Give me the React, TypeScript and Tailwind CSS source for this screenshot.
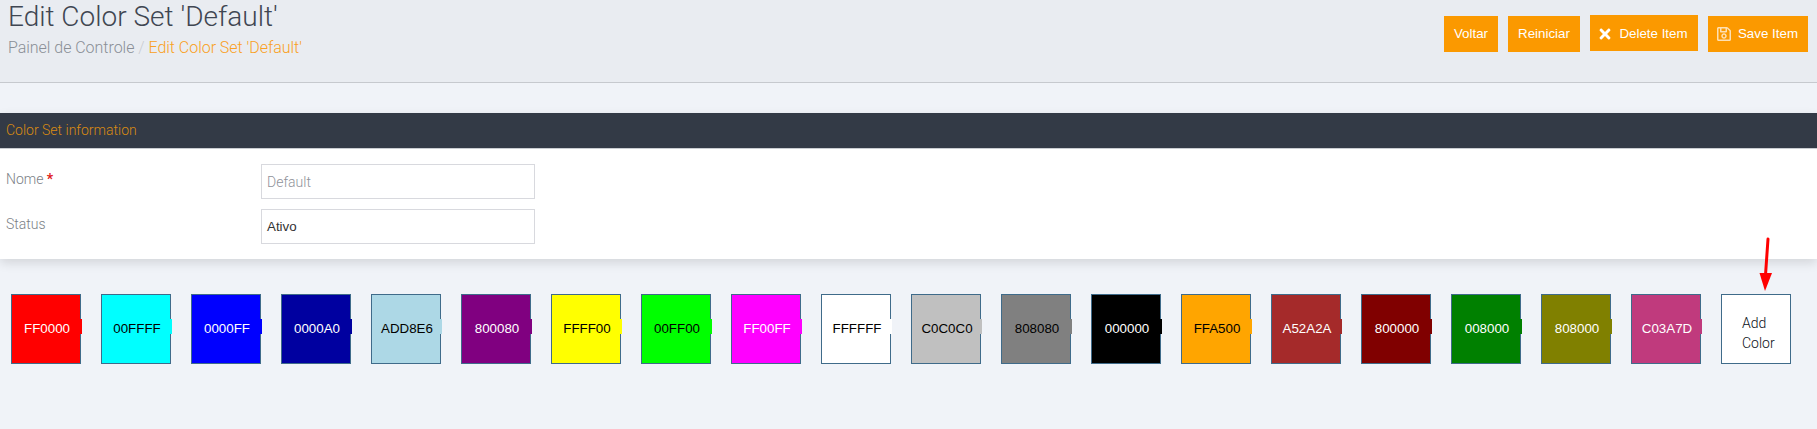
import React from 'react'
import { FaRegSave, FaTimes } from 'react-icons/fa'

const swatches = [
  { code: 'FF0000', bg: 'bg-[#ff0000]', text: 'text-white' },
  { code: '00FFFF', bg: 'bg-[#00ffff]', text: 'text-black' },
  { code: '0000FF', bg: 'bg-[#0000ff]', text: 'text-white' },
  { code: '0000A0', bg: 'bg-[#0000a0]', text: 'text-white' },
  { code: 'ADD8E6', bg: 'bg-[#add8e6]', text: 'text-black' },
  { code: '800080', bg: 'bg-[#800080]', text: 'text-white' },
  { code: 'FFFF00', bg: 'bg-[#ffff00]', text: 'text-black' },
  { code: '00FF00', bg: 'bg-[#00ff00]', text: 'text-black' },
  { code: 'FF00FF', bg: 'bg-[#ff00ff]', text: 'text-white' },
  { code: 'FFFFFF', bg: 'bg-[#ffffff]', text: 'text-black' },
  { code: 'C0C0C0', bg: 'bg-[#c0c0c0]', text: 'text-black' },
  { code: '808080', bg: 'bg-[#808080]', text: 'text-black' },
  { code: '000000', bg: 'bg-[#000000]', text: 'text-white' },
  { code: 'FFA500', bg: 'bg-[#ffa500]', text: 'text-black' },
  { code: 'A52A2A', bg: 'bg-[#a52a2a]', text: 'text-white' },
  { code: '800000', bg: 'bg-[#800000]', text: 'text-white' },
  { code: '008000', bg: 'bg-[#008000]', text: 'text-white' },
  { code: '808000', bg: 'bg-[#808000]', text: 'text-white' },
  { code: 'C03A7D', bg: 'bg-[#c03a7d]', text: 'text-white' }
]

const btn =
  "flex h-9 items-center justify-center bg-[#fb9900] font-['Liberation_Sans',sans-serif] text-[13.33px] text-white"

const App = () => {
  return (
    <div className="relative h-[429px] overflow-hidden bg-[#f0f3f8] font-['Roboto',sans-serif]">
      <header className="flex h-[83px] justify-between border-b border-[#c6c9ce] bg-[#e9ecf1] pl-2 pr-[9px]">
        <div>
          <h1 className="text-[28px] leading-[34px] font-light text-[#3f4652]">Edit Color Set 'Default'</h1>
          <p className="mt-[2px] text-[16px] leading-[24px] font-light tracking-[-0.03px] text-[#8a8f96]">
            Painel de Controle <span className="text-[#c9ccd1]">/</span>{' '}
            <span className="text-[#f9a023]">Edit Color Set 'Default'</span>
          </p>
        </div>
        <div className="flex gap-[10px] pt-4">
          <button className={`${btn} w-[54px]`}>Voltar</button>
          <button className={`${btn} w-[72px]`}>Reiniciar</button>
          <button className={`${btn} -mt-px w-[108px] gap-[6px] pt-[2px] pr-[3px]`}>
            <FaTimes className="text-[16px]" />
            Delete Item
          </button>
          <button className={`${btn} w-[100px] gap-[6px] pr-[2px]`}>
            <FaRegSave className="text-[16px] opacity-70" />
            Save Item
          </button>
        </div>
      </header>

      <section className="mt-[30px] bg-white shadow-[0_4px_10px_rgba(0,0,0,0.12)]">
        <h2 className="flex h-[36px] items-center border-b border-[#c9ccd1] bg-[#333a46] pl-[6px] text-[14px] font-light text-[#d98a12]">
          Color Set information
        </h2>
        <div className="flex flex-col gap-[10px] pt-[15px] pb-[15px] pl-[6px]">
          <div className="flex">
            <label className="w-[255px] pt-[2px] text-[14px] leading-[26px] font-light text-[#7b7f86]">
              Nome <span className="font-bold text-[#e01a1a]">*</span>
            </label>
            <input
              readOnly
              placeholder="Default"
              className="h-[35px] w-[274px] border border-[#d8d9de] bg-white px-[5px] text-[14px] font-light placeholder:text-[#8f9299]"
            />
          </div>
          <div className="flex">
            <label className="w-[255px] pt-[2px] text-[14px] leading-[26px] font-light text-[#7b7f86]">Status</label>
            <div className="flex h-[35px] w-[274px] items-center border border-[#d8d9de] bg-white px-[5px] font-['Liberation_Sans',sans-serif] text-[13.33px] text-[#333]">
              Ativo
            </div>
          </div>
        </div>
      </section>

      <div className="mt-[35px] flex gap-5 pl-[11px] font-['Liberation_Sans',sans-serif]">
        {swatches.map((s) => (
          <div
            key={s.code}
            className={`relative flex h-[70px] w-[70px] items-center justify-center border border-[#3f6b8a] pl-[2px] text-[13.33px] ${s.bg} ${s.text}`}>
            {s.code}
            <span className={`absolute top-[24px] -right-[2px] h-[15px] w-[3px] ${s.bg}`} />
          </div>
        ))}
        <div className="flex h-[70px] w-[70px] items-center border border-[#3f6b8a] bg-white pt-2 pl-5 text-[14px] leading-[20px]">
          <div className="font-['Roboto',sans-serif] font-light text-[#0c1018]">
            Add
            <br />
            Color
          </div>
        </div>
      </div>

      <svg className="absolute top-[237px] left-[1755px]" width="22" height="56" viewBox="0 0 22 56">
        <path d="M13 2 L10.5 38" stroke="#ff0000" strokeWidth="3" strokeLinecap="round" fill="none" />
        <path d="M4.5 36 L17 36 L10 54 Z" fill="#ff0000" />
      </svg>
    </div>
  )
}

export default App
